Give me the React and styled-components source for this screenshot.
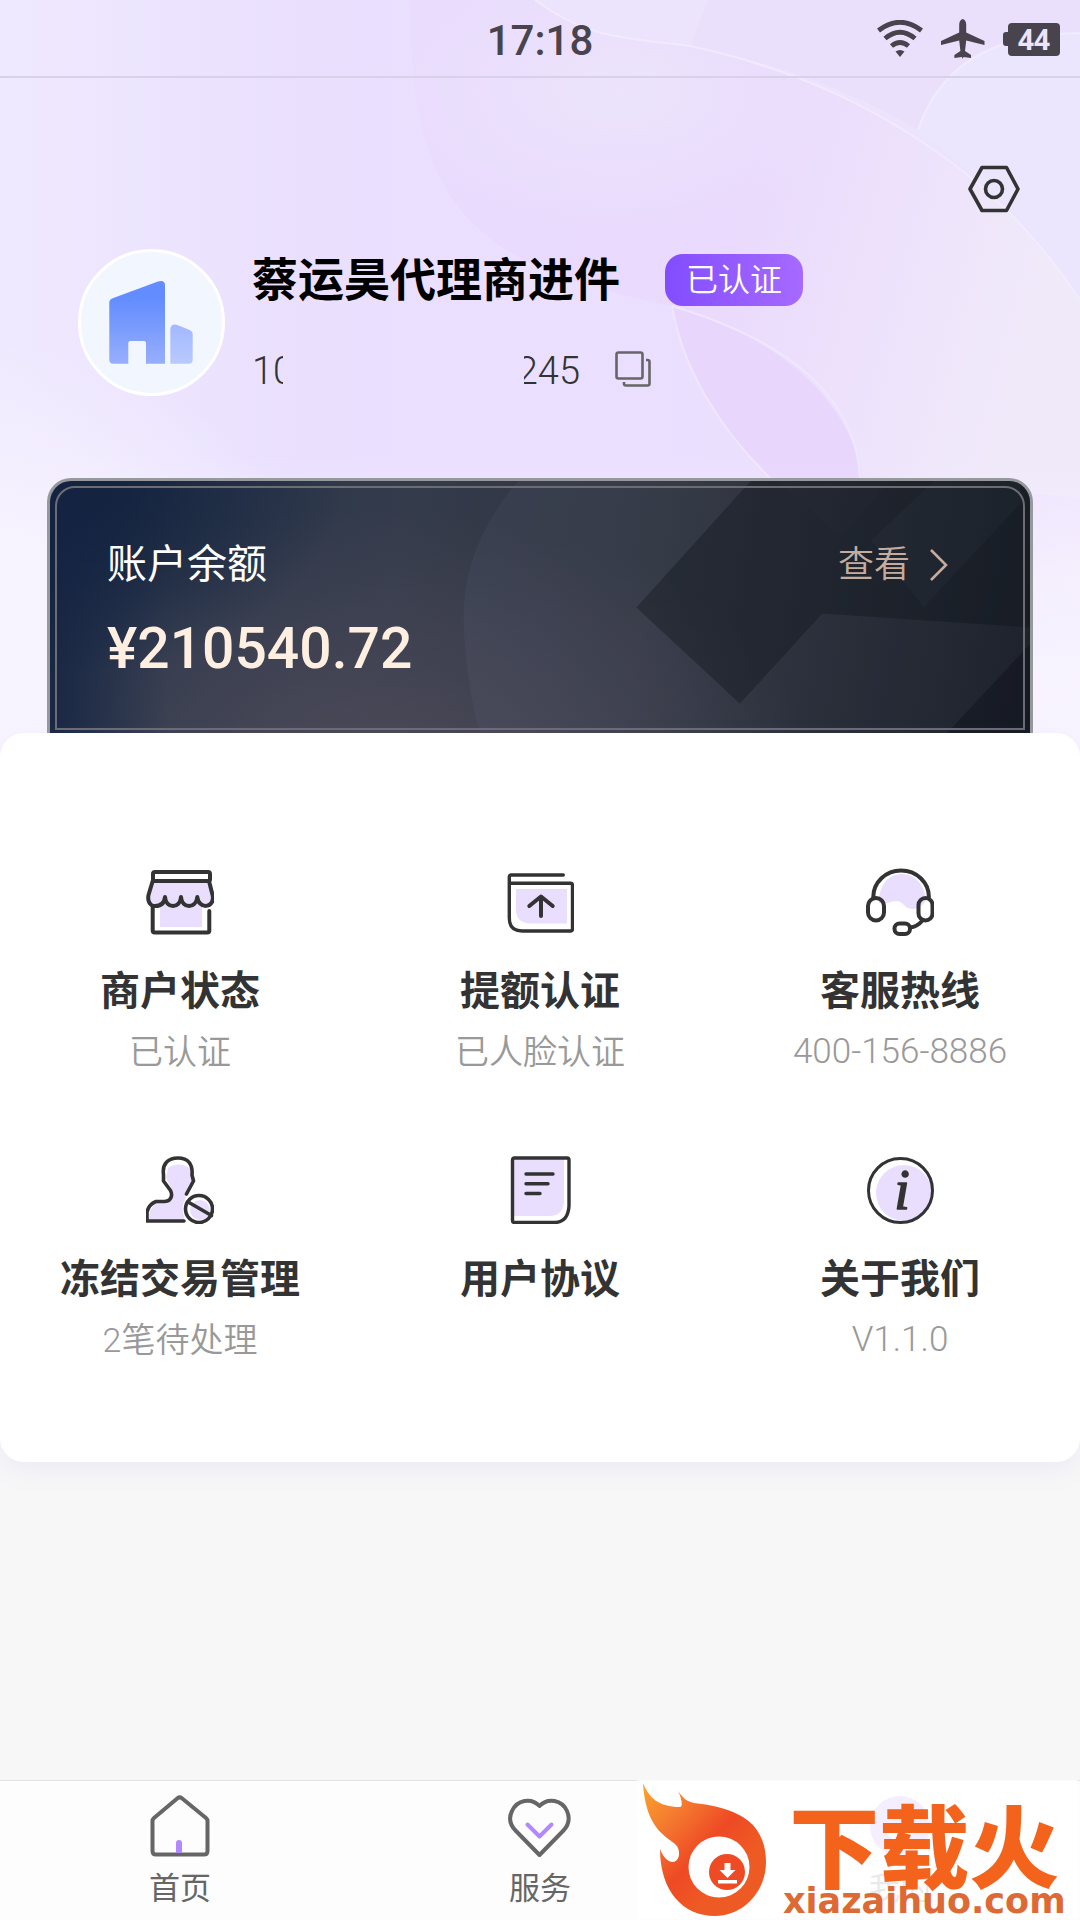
import styled, { createGlobalStyle } from "styled-components";

const GlobalStyle = createGlobalStyle`
  * {
    box-sizing: border-box;
  }
  body {
    margin: 0;
    background: #f7f7f7;
    color: #333;
    font-family: Roboto, "Noto Sans CJK SC", sans-serif;
  }
  button {
    padding: 0;
    border: 0;
    background: none;
    color: inherit;
    font-family: inherit;
    cursor: pointer;
  }
  a {
    color: inherit;
    text-decoration: none;
  }
  svg {
    display: block;
  }
`;

const Page = styled.div`
  display: flex;
  flex-direction: column;
  min-height: 100vh;
`;

const Hero = styled.header`
  position: relative;
  background: #ebe2fe;
`;

const Backdrop = styled.svg`
  position: absolute;
  top: 0;
  left: 0;
  width: 100%;
  height: 100%;
`;

const StatusBar = styled.div`
  position: relative;
  display: grid;
  grid-template-columns: 1fr auto 1fr;
  align-items: center;
  height: 78px;
  padding: 2px 20px 0;
  border-bottom: 2px solid #d9d0ea;
  color: #48434c;
`;

const Time = styled.time`
  grid-column: 2;
  padding-top: 4px;
  font-size: 42px;
  font-weight: 500;
  line-height: 48px;
`;

const StatusIcons = styled.div`
  display: flex;
  justify-content: flex-end;
  align-items: center;
  gap: 18px;
`;

const Battery = styled.div`
  display: flex;
  align-items: center;

  &::before {
    content: "";
    width: 5px;
    height: 14px;
    border-radius: 3px 0 0 3px;
    background: #48434c;
  }
`;

const BatteryLevel = styled.span`
  width: 52px;
  border-radius: 4px;
  background: #48434c;
  color: #ece4fb;
  font-family: "Noto Sans", sans-serif;
  font-size: 28px;
  font-weight: 700;
  line-height: 33px;
  text-align: center;
`;

const Toolbar = styled.div`
  position: relative;
  display: flex;
  justify-content: flex-end;
  padding: 86px 60px 0;
`;

const Profile = styled.section`
  position: relative;
  display: flex;
  align-items: center;
  gap: 27px;
  padding: 35px 78px 0;
`;

const Avatar = styled.div`
  width: 147px;
  height: 147px;
  border: 3px solid #fff;
  border-radius: 50%;
  background: #f2f6ff;
`;

const Identity = styled.div`
  display: flex;
  flex-direction: column;
  gap: 39px;
  padding-bottom: 2px;
`;

const NameRow = styled.div`
  display: flex;
  align-items: center;
  gap: 45px;
`;

const Name = styled.h1`
  margin: 0;
  color: #000;
  font-size: 46px;
  font-weight: 700;
  line-height: 60px;
`;

const Badge = styled.span`
  padding: 0 21px;
  border-radius: 18px;
  background: linear-gradient(90deg, #824dff, #a66aff);
  color: #fff;
  font-size: 32px;
  font-weight: 350;
  line-height: 52px;
`;

const NumberRow = styled.div`
  display: flex;
  align-items: center;
  color: #333;
  font-size: 38px;
  font-weight: 300;
  line-height: 44px;
`;

const Digits = styled.span`
  display: flex;
  justify-content: ${(props) => (props.$tail ? "flex-end" : "flex-start")};
  width: ${(props) => (props.$tail ? "56px" : "31px")};
  margin-left: ${(props) => (props.$tail ? "241px" : "0")};
  overflow: hidden;
`;

const CopyButton = styled.button`
  margin-left: 35px;
  padding-bottom: 4px;
`;

const Balance = styled.section`
  position: relative;
  height: 279px;
  margin: 82px 47px 0;
  padding: 56px 81px 0 57px;
  border: 3px solid #96999b;
  border-bottom: 0;
  border-radius: 24px 24px 0 0;
  background:
    linear-gradient(90deg, rgba(20, 35, 66, 0.8), transparent 12%),
    radial-gradient(ellipse 30% 70% at 0% 0%, #14233f 20%, transparent),
    radial-gradient(ellipse 45% 90% at 32% 100%, #4b4958, transparent),
    linear-gradient(100deg, #24344c, #343b4b 35%, #30343f 60%, #141820);
  overflow: hidden;
`;

const InnerFrame = styled.div`
  position: absolute;
  inset: 5px 5px 27px;
  border: 2px solid #6c6c73;
  border-radius: 20px 20px 0 0;
`;

const BalanceHead = styled.div`
  position: relative;
  display: flex;
  justify-content: space-between;
  align-items: center;
`;

const BalanceTitle = styled.h2`
  margin: 0;
  color: #fff;
  font-size: 40px;
  font-weight: 400;
  line-height: 56px;
`;

const ViewLink = styled.a`
  display: flex;
  align-items: center;
  gap: 19px;
  color: #c4ad9f;
  font-size: 36px;
  font-weight: 350;
  line-height: 56px;
`;

const Amount = styled.div`
  position: relative;
  margin-top: 24px;
  color: #ffefe0;
  font-size: 57px;
  font-weight: 500;
  line-height: 64px;
`;

const Panel = styled.main`
  position: relative;
  display: grid;
  grid-template-columns: repeat(3, 1fr);
  row-gap: 82px;
  margin-top: -24px;
  padding: 135px 0 100px;
  border-radius: 24px;
  background: #fff;
  box-shadow: 0 8px 24px rgba(150, 130, 240, 0.1);
`;

const Entry = styled.button`
  display: flex;
  flex-direction: column;
  align-items: center;
  height: 206px;
`;

const EntryTitle = styled.span`
  margin-top: 28px;
  color: #333;
  font-size: 40px;
  font-weight: 700;
  line-height: 56px;
`;

const EntryNote = styled.span`
  margin-top: 10px;
  color: #999;
  font-size: ${(props) => (props.$latin ? 35 : 34)}px;
  font-weight: ${(props) => (props.$latin ? 300 : 350)};
  line-height: 44px;
`;

const TabBar = styled.nav`
  position: relative;
  display: grid;
  grid-template-columns: repeat(3, 1fr);
  height: 140px;
  margin-top: auto;
  border-top: 1px solid #e2e2e2;
  background: #fdfdfd;
`;

const Tab = styled.a`
  display: flex;
  flex-direction: column;
  align-items: center;
  gap: 9px;
  padding-top: 13px;
  color: #666;
  font-size: 31px;
  line-height: 44px;
`;

const SiteMark = styled.a`
  position: absolute;
  top: -1px;
  right: 2px;
  display: flex;
  align-items: flex-start;
  gap: 13px;
  width: 441px;
  height: 139px;
  padding-left: 3px;
  background: rgba(255, 255, 255, 0.86);
`;

const SiteText = styled.span`
  display: flex;
  flex-direction: column;
  align-items: center;
  padding-top: 18px;
  color: #f4631c;
`;

const SiteName = styled.span`
  font-family: "Noto Sans CJK SC", sans-serif;
  font-size: 90px;
  font-weight: 900;
  line-height: 88px;
`;

const SiteDomain = styled.span`
  color: #dd6a35;
  font-family: "DejaVu Sans", sans-serif;
  font-size: 35px;
  font-weight: 700;
  line-height: 30px;
`;

function Line({ size, color = "#333", width = 4, children }) {
  return (
    <svg
      width={size}
      height={size}
      viewBox={`0 0 ${size} ${size}`}
      fill="none"
      stroke={color}
      strokeWidth={width}
      strokeLinecap="round"
      strokeLinejoin="round"
      aria-hidden="true"
    >
      {children}
    </svg>
  );
}

const tint = { fill: "#eadeff", stroke: "none" };

function ShopIcon() {
  return (
    <Line size={68}>
      <path {...tint} d="M7 14h56l5 15q-1 9-8 9H56v21H14V38H9q-6-3-7-9z" />
      <path d="M7 12V6q0-2 2-2h53q2 0 2 2v6M6.700 13h57M6.700 13 2.500 27q-1.500 8 4.500 11 11 1 12-9c1 12 15 12 16 0 1 12 15 12 16.300 0 1 12 17 12 15.500-1L63 13" />
      <path d="M6.700 38v24.500q0 2 2 2h52.600q2 0 2-2V43" />
    </Line>
  );
}

function LimitIcon() {
  return (
    <Line size={68} width={3.4}>
      <path {...tint} d="M10 21h51v34.500H23Q10 54 10 42z" />
      <path d="M57.300 7H5.300q-2 0-2 2v41q0 13 13 13H65q1.500 0 1.500-2V17.300q0-2-2-2H3.300" />
      <path strokeWidth="4" d="M35 48V29M23.300 38 35 28.500 46.700 38" />
    </Line>
  );
}

function HotlineIcon() {
  return (
    <Line size={68}>
      <path {...tint} d="M13 32C14 16 23 6 36 6s23 11 24 26q-5 9-12 9c-10 1-10-8-18-8-5 0-8 4-17 2z" />
      <path d="M7.300 29a27.800 26.500 0 0 1 55.600 0" />
      <rect x="2" y="30" width="16" height="22.500" rx="8" />
      <rect x="52.500" y="30" width="14" height="22.500" rx="7" />
      <rect x="28.500" y="55.500" width="15.500" height="10.500" rx="5" />
      <path d="M44 59.500Q51 59 57 52" />
    </Line>
  );
}

function FreezeIcon() {
  return (
    <Line size={68} width={3.6}>
      <path {...tint} d="M22 12q11-8 25 2v10l-7 14-2 26H3q-1-12 9-18l12-3q4-5 2-9l-6-12z" />
      <path d="M38 65H1v-9Q3 48 10 45.500h8c7 0 9-6 6.500-11L17.500 25v-6.500C16 8 22 2 32 2s15 6 14 17l1.500 6L40.500 38" />
      <circle cx="54" cy="53" r="17.500" fill="#fff" stroke="none" />
      <circle {...tint} cx="54" cy="54" r="10" />
      <circle cx="53" cy="53" r="13.500" />
      <path d="m43 46.500 22.500 13" />
    </Line>
  );
}

function AgreementIcon() {
  return (
    <Line size={68} width={3.4}>
      <path {...tint} d="M8 3h50v43q-1 13-13 14H8z" />
      <path d="M8.500 2H61q2 0 2 2v46q-1 16-14 16.500H8.500q-2 0-2-2V4q0-2 2-2z" />
      <path d="M20 18h27M20 27.700h22M20 37.500h14" />
    </Line>
  );
}

function AboutIcon() {
  return (
    <Line size={68} width={3}>
      <circle {...tint} cx="38" cy="37" r="28" />
      <circle cx="34.500" cy="34.500" r="32" />
      <text
        x="36"
        y="53"
        fill="#333"
        stroke="#333"
        strokeWidth="1.500"
        fontFamily="Liberation Serif, serif"
        fontSize="56"
        fontStyle="italic"
        textAnchor="middle"
      >
        i
      </text>
    </Line>
  );
}

function HomeIcon() {
  return (
    <Line size={64} color="#666">
      <path d="M29.500 4.300q2.200-1.800 4.400 0L58 24q1.500 1.300 1.500 3v30q0 3.500-3.500 3.500H8q-3.500 0-3.500-3.500V27q0-1.700 1.500-3z" />
      <path stroke="#b388ff" strokeWidth="6" strokeLinecap="butt" d="M31 59V50" />
      <circle cx="31" cy="49" r="3" fill="#b388ff" stroke="none" />
    </Line>
  );
}

function ServiceIcon() {
  return (
    <Line size={64} color="#666">
      <path d="M31.500 61 8 37C1 30 1 23 4 17c5-11 19-14 27.500-5C40 3 54 6 59 17c3 7 2 14-4 20z" />
      <path stroke="#b388ff" d="m19.500 30.500 12 12 12-12" />
    </Line>
  );
}

function MineIcon() {
  return (
    <svg width="64" height="64" viewBox="0 0 64 64" aria-hidden="true">
      <circle cx="32" cy="32" r="30" fill="#b388ff" />
      <path d="M17 32a15 15 0 0 0 30 0z" fill="#fff" />
    </svg>
  );
}

function WifiIcon() {
  return (
    <svg width="46" height="38" viewBox="0 0 46 38" fill="none" stroke="#48434c" strokeWidth="4.800" aria-hidden="true">
      <path d="M1.500 10.500q21.500-16.500 43 0M8 18.500q15-12.500 30 0M14.500 26q8.500-7 17 0" />
      <path d="M18.500 31.500q4.500-3 9 0L23 37z" fill="#48434c" stroke="none" />
    </svg>
  );
}

function PlaneIcon() {
  return (
    <svg width="44" height="40" viewBox="0 0 44 40" fill="#48434c" aria-hidden="true">
      <path d="M21.700 0q3.500 1 3.500 6v7.500L43.500 22v4L25.200 21.500 24 32l6 4v3l-7.500-1-.8 2-.8-2-7.500 1v-3l6-4-1.200-10.500L0 26v-4l18.200-8.500V6q0-5 3.500-6z" />
    </svg>
  );
}

function BuildingIcon() {
  return (
    <svg width="141" height="141" viewBox="3 3 141 141" aria-hidden="true">
      <defs>
        <linearGradient id="tower" x1="0" y1="0" x2="0" y2="1">
          <stop offset="0.200" stopColor="#628cff" />
          <stop offset="1" stopColor="#97aefc" />
        </linearGradient>
        <linearGradient id="annex" x1="0" y1="0" x2="0" y2="1">
          <stop offset="0" stopColor="#a2b8ff" />
          <stop offset="1" stopColor="#b9cafe" />
        </linearGradient>
      </defs>
      <path
        fill="url(#tower)"
        d="M34 49.500 80 32.500q7-2 7 4V114.700H68V94q0-2-2-2H52.300q-2 0-2 2v20.700H35.300q-4 0-4-4V53q0-2.500 2.700-3.500z"
      />
      <path fill="url(#annex)" d="M92.300 80q1-6 7-4l12.400 5q3 1.500 3 4v25.700q0 4-4 4H92.300z" />
    </svg>
  );
}

function FlameLogo() {
  return (
    <svg width="130" height="139" viewBox="0 0 130 139" aria-hidden="true">
      <defs>
        <linearGradient id="flame" x1="0" y1="0" x2="0.700" y2="0.700">
          <stop offset="0" stopColor="#fba52c" />
          <stop offset="0.350" stopColor="#f57a30" />
          <stop offset="0.700" stopColor="#ee4a24" />
          <stop offset="1" stopColor="#ee5a24" />
        </linearGradient>
      </defs>
      <path
        fill="url(#flame)"
        d="M3 3c6 15 16 24 37 24 3 0 2-8-2-16 5 7 8 10 16 12 20 2 44 7 59 22 9 10 13 23 13 37 0 30-23 54-51 54-32 0-55-25-55-67 4 10 9 13 13 13 6-1 8-9 4-16C30 57 6 53 3 3z"
      />
      <circle cx="79" cy="87" r="30.500" fill="#fff" />
      <circle cx="87" cy="92" r="18" fill="#ee4a24" />
      <path fill="#fff" d="M84.500 83h6v7h5l-8 8-8-8h5zM78 100h19v3.500H78z" />
    </svg>
  );
}

function HeroBackdrop() {
  return (
    <Backdrop viewBox="0 0 1080 757" preserveAspectRatio="none" aria-hidden="true">
      <defs>
        <linearGradient id="base" x1="0" y1="0" x2="1" y2="0">
          <stop offset="0" stopColor="#efe9fe" />
          <stop offset="0.280" stopColor="#eae0fe" />
          <stop offset="0.700" stopColor="#ebdffe" />
          <stop offset="1" stopColor="#efe6fd" />
        </linearGradient>
        <linearGradient id="petal" x1="0" y1="0" x2="1" y2="0.200">
          <stop offset="0" stopColor="#e9dcfd" />
          <stop offset="0.550" stopColor="#eadafd" />
          <stop offset="1" stopColor="#f0e9fa" />
        </linearGradient>
        <radialGradient id="glow">
          <stop offset="0" stopColor="#ece4fb" />
          <stop offset="1" stopColor="#ece4fb" stopOpacity="0" />
        </radialGradient>
        <linearGradient id="fade" x1="0" y1="0" x2="0" y2="1">
          <stop offset="0.600" stopColor="#f8f4ff" stopOpacity="0" />
          <stop offset="1" stopColor="#f8f4ff" />
        </linearGradient>
        <radialGradient id="corner">
          <stop offset="0.300" stopColor="#f8f4ff" />
          <stop offset="1" stopColor="#f8f4ff" stopOpacity="0" />
        </radialGradient>
      </defs>
      <rect width="1080" height="757" fill="url(#base)" />
      <path
        fill="url(#petal)"
        d="M410 0c0 130 25 190 70 230 50 45 120 60 200 78 90 30 150 80 182 170l218 20V0z"
      />
      <ellipse cx="620" cy="90" rx="230" ry="140" fill="url(#glow)" />
      <path fill="#ece4fd" d="M535 0c50 38 90 38 155 46C840 78 990 160 1080 300V0z" />
      <path fill="#ebe0fc" d="M708 0 690 46c100 20 170 50 228 84 20-60 70-97 162-97V0z" />
      <path fill="#ebe6fe" d="M918 130c20-60 70-97 162-97v267c-40-66-90-120-162-170z" />
      <path
        fill="none"
        stroke="#f4eefe"
        strokeWidth="2"
        opacity="0.700"
        d="M535 0c50 38 90 38 155 46C840 78 990 160 1080 300M918 130c20-60 70-97 162-97"
      />
      <path fill="#e8d6fd" d="M672 306c10 60 45 120 98 172h92c-10-76-82-140-190-172z" />
      <path
        fill="none"
        stroke="#f0e6fe"
        strokeWidth="2"
        d="M672 306c10 60 45 120 98 172M672 306c120 36 184 92 188 172"
      />
      <rect width="1080" height="757" fill="url(#fade)" />
      <ellipse cx="0" cy="680" rx="340" ry="340" fill="url(#corner)" />
      <ellipse cx="1080" cy="720" rx="220" ry="240" fill="url(#corner)" opacity="0.600" />
    </Backdrop>
  );
}

function CardBackdrop() {
  return (
    <Backdrop viewBox="0 0 986 279" preserveAspectRatio="none" aria-hidden="true">
      <path d="M471 0q-55 64-55 137 2 80 24 142h546V0z" fill="#7f83a8" opacity="0.090" />
      <path d="M705 0 590 128l104 97 83-91 209 14V0H846l-50 57-63-57z" fill="#0c1118" opacity="0.350" />
      <path d="m889 0-63 60 53 68 98-106V0z" fill="#69708a" opacity="0.060" />
      <path d="m733 0 63 57 50-57z" fill="#0c1118" opacity="0.300" />
      <path d="M986 165v114H880z" fill="#080c14" opacity="0.350" />
    </Backdrop>
  );
}

const entries = [
  { title: "商户状态", note: "已认证", Icon: ShopIcon },
  { title: "提额认证", note: "已人脸认证", Icon: LimitIcon },
  { title: "客服热线", note: "400-156-8886", latin: true, Icon: HotlineIcon },
  { title: "冻结交易管理", note: "2笔待处理", Icon: FreezeIcon },
  { title: "用户协议", note: "", Icon: AgreementIcon },
  { title: "关于我们", note: "V1.1.0", latin: true, Icon: AboutIcon },
];

const tabs = [
  { label: "首页", Icon: HomeIcon },
  { label: "服务", Icon: ServiceIcon },
  { label: "我的", Icon: MineIcon },
];

export default function App() {
  return (
    <Page>
      <GlobalStyle />
      <Hero>
        <HeroBackdrop />
        <StatusBar>
          <Time>17:18</Time>
          <StatusIcons>
            <WifiIcon />
            <PlaneIcon />
            <Battery>
              <BatteryLevel>44</BatteryLevel>
            </Battery>
          </StatusIcons>
        </StatusBar>
        <Toolbar>
          <button type="button" aria-label="设置">
            <svg width="52" height="50" viewBox="0 0 52 50" fill="none" stroke="#333" strokeWidth="3.600" strokeLinejoin="round" aria-hidden="true">
              <path d="M14 3.500h24.500L50 25 38.500 46.500H14L2 25z" />
              <circle cx="26" cy="25" r="8.500" />
            </svg>
          </button>
        </Toolbar>
        <Profile>
          <Avatar>
            <BuildingIcon />
          </Avatar>
          <Identity>
            <NameRow>
              <Name>蔡运昊代理商进件</Name>
              <Badge>已认证</Badge>
            </NameRow>
            <NumberRow>
              <Digits>10</Digits>
              <Digits $tail>245</Digits>
              <CopyButton type="button" aria-label="复制">
                <svg width="36" height="36" viewBox="0 0 36 36" fill="none" stroke="#666" strokeWidth="2.600" aria-hidden="true">
                  <rect x="1.500" y="1.500" width="26" height="26" rx="2" />
                  <path d="M31 9h1.500q2 0 2 2v21.500q0 2-2 2H11q-2 0-2-2V31" />
                </svg>
              </CopyButton>
            </NumberRow>
          </Identity>
        </Profile>
        <Balance>
          <CardBackdrop />
          <InnerFrame />
          <BalanceHead>
            <BalanceTitle>账户余额</BalanceTitle>
            <ViewLink href="#balance">
              查看
              <svg width="20" height="32" viewBox="0 0 20 32" fill="none" stroke="#c4ad9f" strokeWidth="2.600" aria-hidden="true">
                <path d="m2 1 15 15L2 31" />
              </svg>
            </ViewLink>
          </BalanceHead>
          <Amount>¥210540.72</Amount>
        </Balance>
      </Hero>
      <Panel>
        {entries.map(({ title, note, latin, Icon }) => (
          <Entry type="button" key={title}>
            <Icon />
            <EntryTitle>{title}</EntryTitle>
            {note && <EntryNote $latin={latin}>{note}</EntryNote>}
          </Entry>
        ))}
      </Panel>
      <TabBar>
        {tabs.map(({ label, Icon }) => (
          <Tab href="#tab" key={label}>
            <Icon />
            {label}
          </Tab>
        ))}
        <SiteMark href="#site">
          <FlameLogo />
          <SiteText>
            <SiteName>下载火</SiteName>
            <SiteDomain>xiazaihuo.com</SiteDomain>
          </SiteText>
        </SiteMark>
      </TabBar>
    </Page>
  );
}
